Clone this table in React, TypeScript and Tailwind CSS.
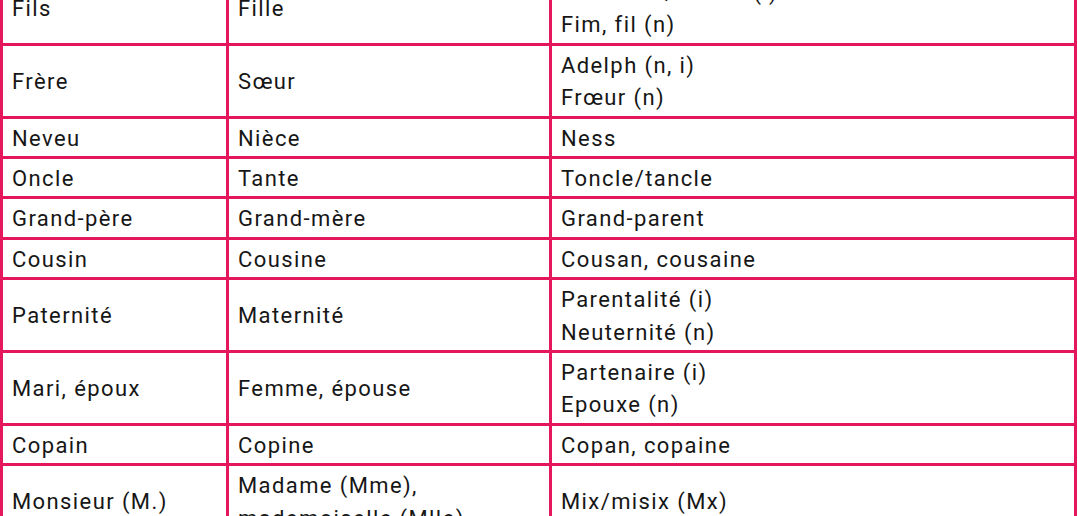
const rows: [string[], string[], string[]][] = [
  [["Fils"], ["Fille"], ["Personne/enfant (i)", "Fim, fil (n)"]],
  [["Frère"], ["Sœur"], ["Adelph (n, i)", "Frœur (n)"]],
  [["Neveu"], ["Nièce"], ["Ness"]],
  [["Oncle"], ["Tante"], ["Toncle/tancle"]],
  [["Grand-père"], ["Grand-mère"], ["Grand-parent"]],
  [["Cousin"], ["Cousine"], ["Cousan, cousaine"]],
  [["Paternité"], ["Maternité"], ["Parentalité (i)", "Neuternité (n)"]],
  [["Mari, époux"], ["Femme, épouse"], ["Partenaire (i)", "Epouxe (n)"]],
  [["Copain"], ["Copine"], ["Copan, copaine"]],
  [["Monsieur (M.)"], ["Madame (Mme),", "mademoiselle (Mlle)"], ["Mix/misix (Mx)"]],
];

function Cell({ lines }: { lines: string[] }) {
  return (
    <td className="border-[3px] border-[#e5175c] px-[9px] pt-[4px] pb-[1px] align-middle">
      {lines.map((l, i) => (
        <div key={i} className="whitespace-nowrap">{l}</div>
      ))}
    </td>
  );
}

export default function App() {
  return (
    <div className="h-[516px] w-[1078px] overflow-hidden bg-white">
      <table className="-mt-[30px] w-[1077px] table-fixed border-collapse font-['Roboto',sans-serif] text-[22px] leading-[32.4px] tracking-[1.4px] text-[#161616]">
        <colgroup>
          <col className="w-[226px]" />
          <col className="w-[323px]" />
          <col />
        </colgroup>
        <tbody>
          {rows.map((r, i) => (
            <tr key={i}>
              <Cell lines={r[0]} />
              <Cell lines={r[1]} />
              <Cell lines={r[2]} />
            </tr>
          ))}
        </tbody>
      </table>
    </div>
  );
}
